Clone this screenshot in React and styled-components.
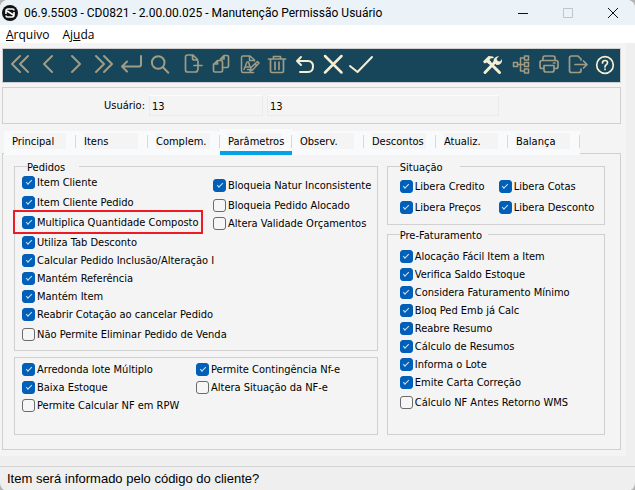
import React, { useState } from "react";
import styled, { createGlobalStyle } from "styled-components";

const TABS = [
    "Principal",
    "Itens",
    "Complem.",
    "Parâmetros",
    "Observ.",
    "Descontos",
    "Atualiz.",
    "Balança",
];

const PEDIDOS = [
    { label: "Item Cliente", on: true },
    { label: "Item Cliente Pedido", on: true },
    { label: "Multiplica Quantidade Composto", on: true, highlight: true },
    { label: "Utiliza Tab Desconto", on: true },
    { label: "Calcular Pedido Inclusão/Alteração I", on: true },
    { label: "Mantém Referência", on: true },
    { label: "Mantém Item", on: true },
    { label: "Reabrir Cotação ao cancelar Pedido", on: true },
    { label: "Não Permite Eliminar Pedido de Venda" },
];

const BLOQUEIOS = [
    { label: "Bloqueia Natur Inconsistente", on: true },
    { label: "Bloqueia Pedido Alocado" },
    { label: "Altera Validade Orçamentos" },
];

const LOTES = [
    { label: "Arredonda lote Múltiplo", on: true },
    { label: "Baixa Estoque", on: true },
    { label: "Permite Calcular NF em RPW" },
];

const NOTAS = [
    { label: "Permite Contingência Nf-e", on: true },
    { label: "Altera Situação da NF-e" },
];

const SITUACAO_A = [
    { label: "Libera Credito", on: true },
    { label: "Libera Preços", on: true },
];

const SITUACAO_B = [
    { label: "Libera Cotas", on: true },
    { label: "Libera Desconto", on: true },
];

const FATURAMENTO = [
    { label: "Alocação Fácil Item a Item", on: true },
    { label: "Verifica Saldo Estoque", on: true },
    { label: "Considera Faturamento Mínimo", on: true },
    { label: "Bloq Ped Emb já Calc", on: true },
    { label: "Reabre Resumo", on: true },
    { label: "Cálculo de Resumos", on: true },
    { label: "Informa o Lote", on: true },
    { label: "Emite Carta Correção", on: true },
    { label: "Cálculo NF Antes Retorno WMS" },
];

const ICONS = {
    first: <path d="M12 4 4 12l8 8M20 4l-8 8 8 8" />,
    prev: <path d="M16 4 8 12l8 8" />,
    next: <path d="m8 4 8 8-8 8" />,
    last: <path d="m4 4 8 8-8 8M12 4l8 8-8 8" />,
    enter: <path d="M21 4v8.500q0 2-2 2H2M7 9.500l-5 5 5 5" />,
    search: (
        <>
            <circle cx="10.200" cy="10.500" r="6.300" />
            <path d="m15 15.300 5.300 5.400" />
        </>
    ),
    add: (
        <path
            strokeWidth="1.700"
            d="M16.500 8.500v-1L12 3H6.500q-2 0-2 2v13q0 2 2 2h8q2 0 2-2M11.500 3v3q0 2 2 2h3M17 9.500v8M13 13.500h8"
        />
    ),
    copy: (
        <path
            strokeWidth="1.700"
            d="M11.500 8V7l3.500-3.500h3q1.500 0 1.500 1.500v9q0 1.500-1.500 1.500h-4M15 3.500V7h-3.500M8.500 8.500H12q1.500 0 1.500 1.500v8.500q0 1.500-1.500 1.500H6q-1.500 0-1.500-1.500v-6l4-4V12h-4"
        />
    ),
    edit: (
        <path
            strokeWidth="1.500"
            d="M17.500 9V8L13 4H6Q4.500 4 4.500 5.500V19q0 1.500 1.500 1.500h10.500M12.500 4v4.500h5M7 17.500 10 10h1.500l1.500 5M8 15h4M13 19l1-3.500 6.500-6 1.500 1.500-6 6.500zM18 12l1.500 1.500M10.500 17.500h2"
        />
    ),
    trash: (
        <path
            strokeWidth="1.700"
            d="M3.500 7h17M8.500 7V4.500h7V7M5.500 7v12q0 1.500 1.500 1.500h10q1.500 0 1.500-1.500V7M10 10v7.500M14 10v7.500"
        />
    ),
    undo: <path d="M8 5 4 9l4 4M4 9h11q5 0 5 5.500t-5 5.500H7" />,
    cancel: <path strokeWidth="2.500" d="m4 4 16.500 16.500M20.500 4 4 20.500" />,
    confirm: <path d="m1 14 7.500 6L23 5" />,
    tools: (
        <>
            <path strokeWidth="3" d="m9 10 10.500 10.500M5 20.500 16 9" />
            <path
                fill="currentColor"
                stroke="none"
                d="M3 9.500 8.500 4 13 4.500 14 6l-3.500.5-1 1.500 1.500 1.500L8.500 12 7 10.500l-2.500 1zM19 4l-2.500 3 1 2 2.500.5 2-2.500q.500 6-5.500 6l-3-3Q13 5 19 4z"
            />
        </>
    ),
    tree: (
        <path
            strokeWidth="1.500"
            d="M5.500 10.500h4v4h-4zM16.500 4h4v4h-4zM16.500 10.500h4v4h-4zM16.500 17h4v4h-4zM9.500 12.500h7M16.500 6h-4v13h4"
        />
    ),
    print: (
        <path
            strokeWidth="1.700"
            d="M7 8.500V6q0-2 2-2h8q2 0 2 2v2.500M7 16.500H6q-2 0-2-2v-4q0-2 2-2h14q2 0 2 2v4q0 2-2 2h-1M8 13.500h10v4.500q0 2-2 2h-6q-2 0-2-2zM17.500 11h1.500"
        />
    ),
    exit: (
        <path
            strokeWidth="1.700"
            d="M17 8V7l-3-3H7.500Q5.500 4 5.500 6v12.500q0 2 2 2H15q2 0 2-2V17M11 12.500h12M19.500 9l3.500 3.500-3.500 3.500"
        />
    ),
    help: (
        <>
            <circle cx="13" cy="13" r="8.300" strokeWidth="1.700" />
            <path
                strokeWidth="1.700"
                d="M10.500 11q0-2.500 2.500-2.500t2.500 2.300q0 1.200-1.500 2.200-1 .700-1 2M13 17v.5"
            />
        </>
    ),
};

const NAV_TOOLS = [
    ["first", "Primeiro"],
    ["prev", "Anterior"],
    ["next", "Próximo"],
    ["last", "Último"],
    ["enter", "Ir para"],
    ["search", "Pesquisar"],
];

const EDIT_TOOLS = [
    ["add", "Incluir"],
    ["copy", "Copiar"],
    ["edit", "Alterar"],
    ["trash", "Eliminar"],
    ["undo", "Desfazer", true],
    ["cancel", "Cancelar", true],
    ["confirm", "Confirmar", true],
];

const SYSTEM_TOOLS = [
    ["tools", "Ferramentas", true],
    ["tree", "Relacionados"],
    ["print", "Imprimir"],
    ["exit", "Sair"],
    ["help", "Ajuda do programa", true],
];

const Tools = ({ items }) => (
    <ToolGroup>
        {items.map(([name, title, bright]) => (
            <ToolButton key={name} type="button" aria-label={title} $bright={bright}>
                <svg viewBox="0 0 24 24" width="24" height="24">
                    {ICONS[name]}
                </svg>
            </ToolButton>
        ))}
    </ToolGroup>
);

const CheckList = ({ items, rows }) => (
    <List $rows={rows}>
        {items.map(({ label, on, highlight }) => (
            <Check key={label} $highlight={highlight}>
                <input type="checkbox" defaultChecked={on} />
                <span>{label}</span>
            </Check>
        ))}
    </List>
);

const App = () => {
    const [activeTab, setActiveTab] = useState("Parâmetros");

    return (
        <>
            <GlobalStyle />
            <Window>
                <TitleBar>
                    <svg width="16" height="16" viewBox="0 0 16 16" aria-hidden="true">
                        <circle cx="8" cy="8" r="8" fill="#111" />
                        <path
                            d="M4 9V6q0-2 2-2h4.500q1.500 0 1.500 1.500M12 7v3q0 2-2 2H5.500Q4 12 4 10.500M5 6l6.500 4"
                            fill="none"
                            stroke="#fff"
                            strokeWidth="1.600"
                        />
                    </svg>
                    <h1>06.9.5503 - CD0821 - 2.00.00.025 - Manutenção Permissão Usuário</h1>
                    <WindowButton type="button" aria-label="Minimizar">
                        <svg width="12" height="12" viewBox="0 0 12 12">
                            <path d="M1 6.500h10" />
                        </svg>
                    </WindowButton>
                    <WindowButton type="button" aria-label="Maximizar" disabled>
                        <svg width="12" height="12" viewBox="0 0 12 12">
                            <path d="M1.500 1.500h9v9h-9z" />
                        </svg>
                    </WindowButton>
                    <WindowButton type="button" aria-label="Fechar">
                        <svg width="12" height="12" viewBox="0 0 12 12">
                            <path d="m1 1 10 10M11 1 1 11" />
                        </svg>
                    </WindowButton>
                </TitleBar>

                <MenuBar>
                    <button type="button">
                        <u>A</u>rquivo
                    </button>
                    <button type="button">
                        Aj<u>u</u>da
                    </button>
                </MenuBar>

                <Body>
                    <Toolbar>
                        <Tools items={NAV_TOOLS} />
                        <Tools items={EDIT_TOOLS} />
                        <Tools items={SYSTEM_TOOLS} />
                    </Toolbar>

                    <UserBar>
                        <label htmlFor="usuario">Usuário:</label>
                        <Field id="usuario" defaultValue="13" $width={114} />
                        <Field aria-label="Nome do usuário" defaultValue="13" $width={232} />
                    </UserBar>

                    <TabStrip role="tablist">
                        {TABS.map((tab) => (
                            <Tab
                                key={tab}
                                type="button"
                                role="tab"
                                aria-selected={tab === activeTab}
                                $active={tab === activeTab}
                                onClick={() => setActiveTab(tab)}
                            >
                                <span>{tab}</span>
                            </Tab>
                        ))}
                    </TabStrip>

                    <Panel>
                        <Column $gap={6}>
                            <Group $pad="0 0 9px 7px">
                                <Legend $gap={52} $indent={5}>
                                    Pedidos
                                </Legend>
                                <Split $first={191}>
                                    <CheckList
                                        items={PEDIDOS}
                                        rows="20px 20px 20px 18px 18px 18px 18px 20px 14px"
                                    />
                                    <Lowered>
                                        <CheckList items={BLOQUEIOS} rows="20px 18px 14px" />
                                    </Lowered>
                                </Split>
                            </Group>
                            <Group $pad="4px 0 22px 7px" $grow>
                                <Split $first={174}>
                                    <CheckList items={LOTES} rows="18px 18px 14px" />
                                    <CheckList items={NOTAS} rows="18px 14px" />
                                </Split>
                            </Group>
                        </Column>
                        <Column $gap={0}>
                            <Group $pad="4px 0 10px 12px">
                                <Legend $gap={60} $indent={0}>
                                    Situação
                                </Legend>
                                <Split $first={99}>
                                    <CheckList items={SITUACAO_A} rows="21px 14px" />
                                    <CheckList items={SITUACAO_B} rows="21px 14px" />
                                </Split>
                            </Group>
                            <Group $pad="6px 0 22px 12px" $grow>
                                <Legend $gap={88} $indent={0}>
                                    Pre-Faturamento
                                </Legend>
                                <CheckList
                                    items={FATURAMENTO}
                                    rows="18px 18px 18px 18px 18px 18px 18px 20px 14px"
                                />
                            </Group>
                        </Column>
                    </Panel>
                </Body>

                <StatusBar>Item será informado pelo código do cliente?</StatusBar>
            </Window>
        </>
    );
};

export default App;

const GlobalStyle = createGlobalStyle`
    * {
        box-sizing: border-box;
    }

    body {
        margin: 0;
        background: #b4b4b4;
        font-family: "DejaVu Sans Condensed", "Noto Sans", sans-serif;
        font-size: 11px;
        color: #000;
    }

    button,
    input {
        font: inherit;
        color: inherit;
    }
`;

const Window = styled.div`
    display: flex;
    flex-direction: column;
    min-height: 100vh;
    background: #efefef;
    border-radius: 8px;
    overflow: hidden;
`;

const TitleBar = styled.header`
    display: flex;
    align-items: center;
    height: 25px;
    padding-left: 2px;
    background: #ebf3f8;

    h1 {
        flex: 1;
        margin: 0 0 0 6px;
        font: 12px Roboto, sans-serif;
        white-space: nowrap;
    }
`;

const WindowButton = styled.button`
    display: flex;
    align-items: center;
    justify-content: center;
    width: 45px;
    height: 25px;
    padding: 0;
    border: 0;
    background: none;

    svg {
        fill: none;
        stroke: #111;
    }

    &:disabled svg {
        stroke: #c0c5c8;
    }
`;

const MenuBar = styled.nav`
    display: flex;
    gap: 13px;
    height: 18px;
    padding-left: 6px;
    background: #fff;

    button {
        padding: 0;
        border: 0;
        background: none;
        font: 12px/20px "Open Sans", sans-serif;
    }
`;

const Body = styled.main`
    flex: 1;
    display: flex;
    flex-direction: column;
    margin-right: 9px;
    padding: 5px 5px 6px 2px;
    background: #f4f4f4;
`;

const Toolbar = styled.div`
    display: flex;
    gap: 5px;
    height: 35px;
    padding: 0 2px 0 3px;
    border: 1px solid #d0d0d0;
    background: #17465a;
`;

const ToolGroup = styled.div`
    display: flex;

    &:last-child {
        margin-left: auto;
    }
`;

const ToolButton = styled.button`
    display: flex;
    justify-content: center;
    width: 28px;
    padding: 3px 0 0;
    border: 0;
    background: none;
    color: ${({ $bright }) => ($bright ? "#f6eed2" : "#a09c86")};

    svg {
        overflow: visible;
        fill: none;
        stroke: currentColor;
        stroke-width: 2;
        stroke-linecap: round;
        stroke-linejoin: round;
    }
`;

const UserBar = styled.div`
    display: flex;
    align-items: center;
    gap: 4px;
    height: 37px;
    margin-top: 4px;
    border: 1px solid #d0d0d0;

    label {
        width: 142px;
        text-align: right;
    }
`;

const Field = styled.input`
    width: ${({ $width }) => $width}px;
    height: 21px;
    padding: 1px 2px 0;
    border: 1px solid #ebebeb;
    border-top-color: #fcfcfc;
    background: #f4f4f4;
`;

const TabStrip = styled.div`
    position: relative;
    display: flex;
    align-self: flex-start;
    align-items: flex-end;
    height: 26px;
    margin: 5px 0 -2px 2px;
`;

const Tab = styled.button`
    display: flex;
    width: 72px;
    height: ${({ $active }) => ($active ? 26 : 24)}px;
    padding: ${({ $active }) => ($active ? "4px" : "2px")} 0 0 8px;
    border: 0;
    background: #f9fafc;
    box-shadow: ${({ $active }) => ($active ? "inset 0 -4px #00a2e8" : "none")};
    text-align: left;
    white-space: nowrap;

    span {
        flex: 1;
        height: 16px;
        line-height: 17px;
        background:
            linear-gradient(#f4f4f4, #f4f4f4) 0 0 / 54px 16px no-repeat,
            linear-gradient(#d6d8da, #d6d8da) 100% 2px / 1px 13px no-repeat;
    }
`;

const Panel = styled.section`
    flex: 1;
    display: grid;
    grid-template-columns: minmax(0, 5fr) minmax(0, 3fr);
    gap: 9px;
    padding: 3px 15px 14px 11px;
    border: 1px solid #d0d0d0;
`;

const Column = styled.div`
    display: flex;
    flex-direction: column;
    gap: ${({ $gap }) => $gap}px;
`;

const Group = styled.fieldset`
    flex: ${({ $grow }) => ($grow ? 1 : "none")};
    min-width: 0;
    margin: 0;
    padding: ${({ $pad }) => $pad};
    border: 1px solid #d0d0d0;
`;

const Legend = styled.legend`
    width: ${({ $gap }) => $gap}px;
    height: 18px;
    margin-left: ${({ $indent }) => $indent}px;
    padding: 4px 0 0;
    line-height: 14px;
    white-space: nowrap;
`;

const Split = styled.div`
    display: grid;
    grid-template-columns: ${({ $first }) => $first}px 1fr;
    align-items: start;
`;

const List = styled.div`
    display: grid;
    grid-template-rows: ${({ $rows }) => $rows};
    align-items: start;
    justify-items: start;
`;

const Lowered = styled.div`
    padding-top: 3px;
`;

const Check = styled.label`
    display: flex;
    align-items: center;
    gap: 2px;
    margin: ${({ $highlight }) => ($highlight ? "-5px 0 -5px -9px" : "0")};
    padding: ${({ $highlight }) => ($highlight ? "3px 2px 3px 7px" : "0")};
    border: ${({ $highlight }) => ($highlight ? "2px solid #ed1c24" : "0")};
    white-space: nowrap;

    span {
        height: 14px;
        line-height: 15px;
    }

    input {
        appearance: none;
        flex: none;
        display: flex;
        justify-content: center;
        width: 13px;
        height: 13px;
        margin: 0;
        border: 1px solid #6b6b6b;
        border-radius: 3px;
        background: #f6f6f6;
    }

    input:checked {
        border-color: #005fb8;
        background: #005fb8;
    }

    input:checked::after {
        content: "";
        box-sizing: border-box;
        width: 6px;
        height: 3px;
        margin-top: 3px;
        border: solid #d5e6f5;
        border-width: 0 0 1px 1px;
        transform: rotate(-45deg);
    }
`;

const StatusBar = styled.footer`
    height: 25px;
    margin-top: 10px;
    padding-left: 7px;
    border-top: 1px solid #d4d4d4;
    font: 13px/24px "Liberation Sans", sans-serif;
`;
